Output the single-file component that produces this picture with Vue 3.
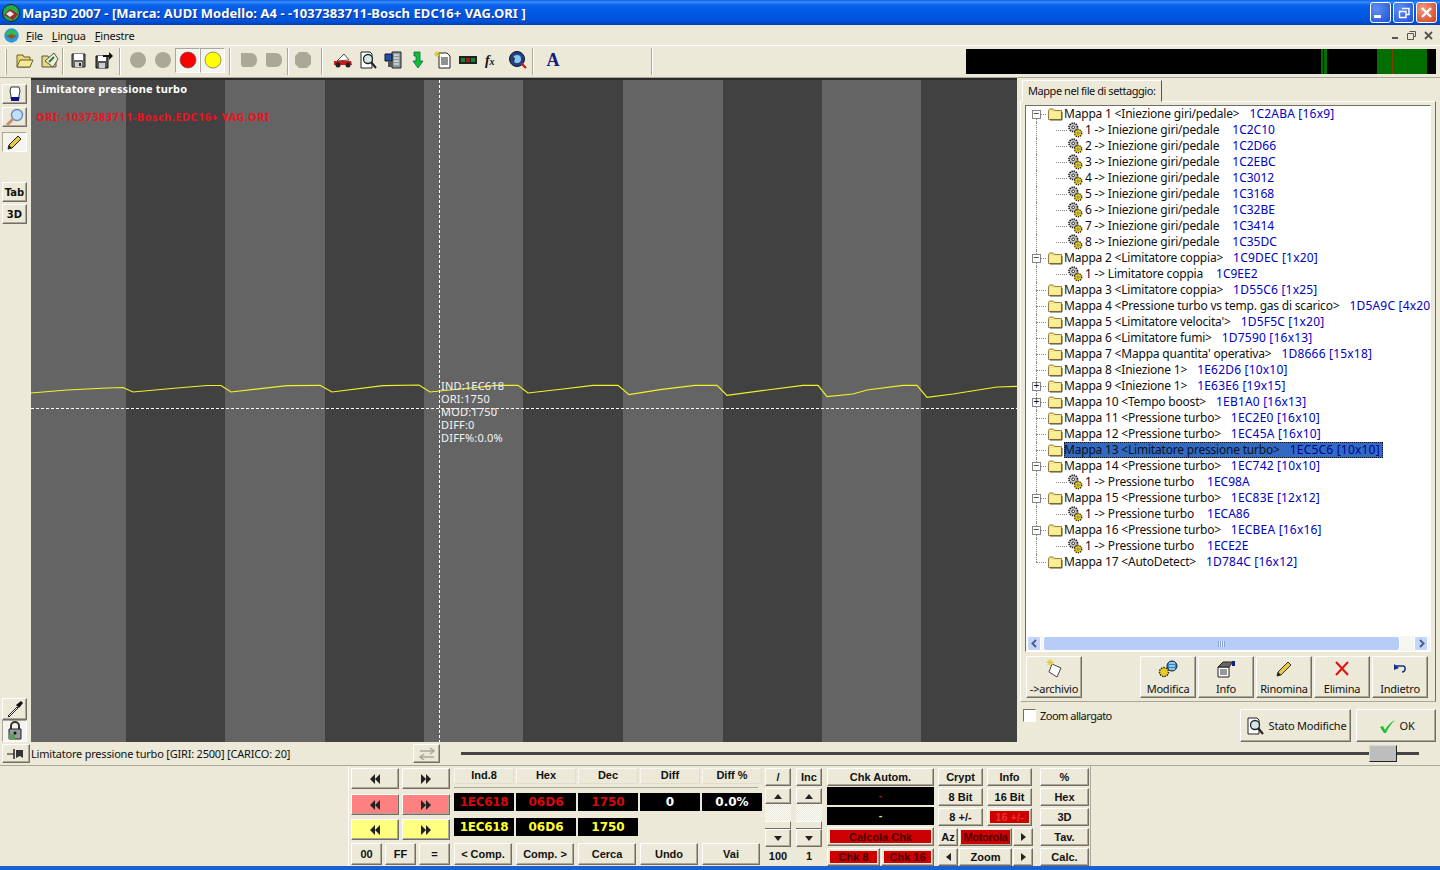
<template>
  <div class="app">
    <svg class="defs" width="0" height="0">
      <defs>
        <symbol id="folder" viewBox="0 0 16 16"><path d="M1.500 4.500l1-1.500h4l1 1.500h7v9h-13z" fill="#f8e67a" stroke="#8d8250"/><path d="M2.500 6h11v6.500h-11z" fill="#fbee98"/><path d="M15 6v8H3" fill="none" stroke="#5a5020"/></symbol>
        <symbol id="gear" viewBox="0 0 18 18">
          <circle cx="7" cy="6" r="4.800" fill="#c4c4c4" stroke="#222" stroke-width="1.800" stroke-dasharray="1.500 1"/><circle cx="7" cy="6" r="1.500" fill="#fff" stroke="#222"/>
          <circle cx="12.500" cy="12.500" r="4" fill="#f2d524" stroke="#3a3200" stroke-width="1.700" stroke-dasharray="1.500 1"/><circle cx="12.500" cy="12.500" r="1.200" fill="#fff" stroke="#3a3200" stroke-width=".7"/>
        </symbol>
        <symbol id="open" viewBox="0 0 20 20"><path d="M2 5h6l1 2h6v10H2z" fill="#e8d978" stroke="#66602a"/><path d="M2 17l3-7h13l-3 7z" fill="#f6ea9a" stroke="#66602a"/></symbol>
        <symbol id="open2" viewBox="0 0 20 20"><path d="M2 6h6l1 2h7v9H2z" fill="#e8d978" stroke="#555"/><path d="M5 11l9-8 4 6-5 8z" fill="#f3f0d8" stroke="#555"/><path d="M9 12l5-5" stroke="#2a7a3a" stroke-width="2"/></symbol>
        <symbol id="save" viewBox="0 0 20 20"><path d="M4 4h13v13H4z" fill="#6a6a6a" stroke="#222"/><path d="M6 4h9v6H6z" fill="#fff"/><path d="M7 12h7v5H7z" fill="#cfcfcf"/><path d="M11 13h2v3h-2z" fill="#222"/></symbol>
        <symbol id="saveall" viewBox="0 0 20 20"><path d="M3 6h12v12H3z" fill="#555" stroke="#111"/><path d="M5 6h8v5H5z" fill="#fff"/><path d="M6 13h6v5H6z" fill="#ccc"/><path d="M10 5h6V2l4 4-4 4V7h-6z" fill="#111"/></symbol>
        <symbol id="dot-gray" viewBox="0 0 20 20"><circle cx="10" cy="10" r="8" fill="#aca899"/></symbol>
        <symbol id="dot-red" viewBox="0 0 20 20"><circle cx="10" cy="10" r="8" fill="#f00" stroke="#555" stroke-width=".6"/></symbol>
        <symbol id="dot-yellow" viewBox="0 0 20 20"><circle cx="10" cy="10" r="8" fill="#ff0" stroke="#555" stroke-width=".6"/></symbol>
        <symbol id="shape-a" viewBox="0 0 20 20"><path d="M2 3h9c5 0 7 3 7 7s-2 7-7 7H5c-2 0-3-1-3-3z" fill="#aca899"/></symbol>
        <symbol id="shape-b" viewBox="0 0 20 20"><path d="M6 2h8l4 4v8l-4 4H6l-4-4V6z" fill="#aca899"/></symbol>
        <symbol id="car" viewBox="0 0 20 20"><path d="M4 11l7-7 5 6z" fill="#fff" stroke="#555"/><path d="M1 11h17l1 4H1z" fill="#d01818"/><circle cx="5" cy="15" r="2.500" fill="#222"/><circle cx="15" cy="15" r="2.500" fill="#222"/></symbol>
        <symbol id="docsearch" viewBox="0 0 20 20"><path d="M3 2h9l2 2v14H3z" fill="#fff" stroke="#222"/><circle cx="10" cy="9" r="4.500" fill="#cfe8e8" stroke="#222" stroke-width="1.300"/><path d="M13 12l5 6" stroke="#222" stroke-width="2"/></symbol>
        <symbol id="binder" viewBox="0 0 20 20"><path d="M9 2h9v16H9z" fill="#8a9a9a" stroke="#222"/><path d="M11 5h5M11 8h5M11 11h5M11 14h5" stroke="#fff"/><path d="M2 4h7v7H2z" fill="#1f4fa8" stroke="#112"/><path d="M5 11h4v6H5z" fill="#555"/></symbol>
        <symbol id="down" viewBox="0 0 20 20"><path d="M6 2h6v9h3l-5 7-5-7h3V6H6z" fill="#10c030" stroke="#066" stroke-width=".8"/></symbol>
        <symbol id="newdoc" viewBox="0 0 20 20"><path d="M6 3h8l3 3v12H6z" fill="#fff" stroke="#222"/><path d="M8 8h7M8 10h7M8 12h7M8 14h7" stroke="#222"/><path d="M4 1v6M1 4h6M2 2l4 4M6 2L2 6" stroke="#d8c020"/></symbol>
        <symbol id="led" viewBox="0 0 20 20"><path d="M1 6h18v8H1z" fill="#222"/><path d="M3 8h4v4H3z" fill="#0a8a2a"/><path d="M8 8h4v4H8z" fill="#a01818"/><path d="M13 8h4v4h-4z" fill="#0a8a2a"/></symbol>
        <symbol id="globe" viewBox="0 0 20 20"><circle cx="9" cy="9" r="7.500" fill="#1f3f90" stroke="#111"/><circle cx="9" cy="9" r="4" fill="#8ac8f0"/><path d="M3 6l4 2-1 5z" fill="#334"/><path d="M13 13l5 5" stroke="#c01818" stroke-width="2.200"/></symbol>
        <symbol id="fx" viewBox="0 0 20 20"><text x="2" y="15" font-family="Liberation Serif, serif" font-style="italic" font-weight="700" font-size="14" fill="#111">f<tspan font-size="10">x</tspan></text></symbol>
        <symbol id="letter" viewBox="0 0 20 20"><text x="10" y="16" text-anchor="middle" font-family="Liberation Serif, serif" font-weight="700" font-size="18" fill="#10207a">A</text></symbol>
        <symbol id="rew" viewBox="0 0 12 10"><path d="M6 0v10L1 5zM11 0v10L6 5z" fill="#222"/></symbol>
        <symbol id="fwd" viewBox="0 0 12 10"><path d="M1 0v10l5-5zM6 0v10l5-5z" fill="#222"/></symbol>
      </defs>
    </svg>

    <header class="titlebar">
      <svg class="app-icon" width="20" height="20" viewBox="0 0 20 20"><circle cx="10" cy="10" r="8.500" fill="#1fae4a" stroke="#123"/><path d="M3 12l6-6 8 5-5 6z" fill="#a02828"/><path d="M5 11l4-3 4 3-4 3z" fill="#e8e8e8"/></svg>
      <span class="title-text">Map3D 2007 - [Marca: AUDI Modello: A4  - -1037383711-Bosch EDC16+ VAG.ORI ]</span>
      <div class="win-buttons">
        <button class="win-btn"><i class="i-min"></i></button>
        <button class="win-btn"><svg width="12" height="12" viewBox="0 0 12 12"><path d="M4 1.500h7v6H8M1.500 4.500h6.500v6H1.500z" fill="none" stroke="#fff" stroke-width="1.400"/></svg></button>
        <button class="win-btn close"><svg width="13" height="13" viewBox="0 0 13 13"><path d="M2 2l9 9M11 2l-9 9" stroke="#fff" stroke-width="2.400"/></svg></button>
      </div>
    </header>

    <nav class="menubar">
      <svg class="menu-icon" width="17" height="17" viewBox="0 0 20 20"><circle cx="10" cy="10" r="8.500" fill="#2a9ae0"/><path d="M3 8c4-6 10-6 14 0l-7 3z" fill="#2cbf50"/><path d="M4 11l6-3 6 3-6 3z" fill="#8a5a20"/></svg>
      <span class="menu-item"><u>F</u>ile</span>
      <span class="menu-item"><u>L</u>ingua</span>
      <span class="menu-item"><u>F</u>inestre</span>
      <div class="mdi-buttons">
        <span class="mdi"><i class="mdi-min"></i></span>
        <span class="mdi"><svg width="11" height="11" viewBox="0 0 11 11"><path d="M3.500 1.500h6v5H7.500M1.500 3.500h6v6h-6z" fill="none" stroke="#555"/></svg></span>
        <span class="mdi"><svg width="11" height="11" viewBox="0 0 11 11"><path d="M2 2l7 7M9 2l-7 7" stroke="#555" stroke-width="1.800"/></svg></span>
      </div>
    </nav>

    <div class="toolbar">
      <span class="grip"></span>
      <template v-for="(item, i) in toolItems" :key="i">
        <span v-if="item.sep" class="tool-sep" :style="{ marginLeft: item.l + 'px', marginRight: item.r + 'px' }"></span>
        <span v-else class="tool" :class="{ latched: item.latched }">
          <svg width="20" height="20"><use :href="'#' + item.icon" /></svg>
        </span>
      </template>
      <div class="led-panel">
        <span class="led l1"></span>
        <span class="led l2"></span>
        <span class="led l3"><i></i></span>
      </div>
    </div>

    <main class="workspace">
      <aside class="sidetools">
        <span class="btn side-btn">
          <svg width="16" height="18" viewBox="0 0 16 18"><path d="M4 2h8l1 4-1 5v3H4v-3L3 6z" fill="#fff" stroke="#333"/><path d="M4 12h8v4H4z" fill="#10108a"/></svg>
        </span>
        <span class="btn side-btn mt3">
          <svg width="20" height="18" viewBox="0 0 20 18"><circle cx="12" cy="7" r="5.500" fill="#bfe0f8" stroke="#6a8ab0" stroke-width="1.400"/><path d="M8 11l-6 6" stroke="#c89070" stroke-width="3"/></svg>
        </span>
        <span class="btn side-btn pressed mt5">
          <svg width="17" height="17" viewBox="0 0 17 17"><path d="M2 15l1-4L12 2l3 3-9 9z" fill="#e8c840" stroke="#222"/><path d="M2 15l1-4 3 3z" fill="#222"/></svg>
        </span>
        <span class="btn side-btn text-btn mt30">Tab</span>
        <span class="btn side-btn text-btn mt2">3D</span>
        <span class="spacer"></span>
        <span class="btn side-btn tall">
          <svg width="20" height="20" viewBox="0 0 20 20"><path d="M3 17l9-9 1 1-9 9z" fill="#fff" stroke="#222"/><path d="M11 6l3 3 4-5-2-2z" fill="#111"/></svg>
        </span>
        <span class="btn side-btn tall pressed flat-bottom">
          <svg width="16" height="20" viewBox="0 0 16 20"><path d="M4 8V5a4 4 0 0 1 8 0v3" fill="none" stroke="#333" stroke-width="2"/><path d="M2 8h12v10H2z" fill="#9a9a9a" stroke="#222"/><path d="M2 13h6v5H2z" fill="#5aa05a"/><circle cx="8" cy="12" r="1.500" fill="#111"/></svg>
        </span>
      </aside>

      <section class="chart">
        <svg class="chart-svg" viewBox="31 80 986 662" width="986" height="662">
          <rect v-for="b in bands" :key="b.x" :x="b.x" y="80" :width="b.w" height="662" :fill="b.dark ? '#414141' : '#646464'" />
          <polyline :points="tracePoints" fill="none" stroke="#f2f228" stroke-width="1.200" />
          <line x1="439.500" y1="80" x2="439.500" y2="742" class="cross" />
          <line x1="31" y1="408.500" x2="1017" y2="408.500" class="cross" />
        </svg>
        <div class="chart-title">Limitatore pressione turbo</div>
        <div class="chart-file">ORI:-1037383711-Bosch.EDC16+ VAG.ORI</div>
        <div class="chart-tip">
          <div>IND:1EC618</div>
          <div>ORI:1750</div>
          <div>MOD:1750</div>
          <div>DIFF:0</div>
          <div>DIFF%:0.0%</div>
        </div>
      </section>

      <aside class="maps">
        <div class="tab">Mappe nel file di settaggio:</div>
        <div class="page">
          <div class="tree">
            <div class="tree-list">
              <div
                v-for="(row, i) in treeRows"
                :key="i"
                class="tree-row"
                :class="{ child: row.child, first: i === 0, last: i === treeRows.length - 1 }"
              >
                <span class="vline"></span>
                <span v-if="row.child" class="hline child-line"></span>
                <span v-else class="hline"></span>
                <span v-if="row.twist" class="twist">{{ row.twist }}</span>
                <svg class="row-icon" width="16" height="16"><use :href="row.child ? '#gear' : '#folder'" /></svg>
                <span class="row-label" :class="{ selected: row.selected }">
                  <span class="row-name">{{ row.name }}</span><span class="row-addr">{{ row.addr }}</span>
                </span>
              </div>
            </div>
            <div class="hscroll">
              <span class="sb-btn"><svg width="9" height="9" viewBox="0 0 9 9"><path d="M6 1L2.500 4.500 6 8" fill="none" stroke="#4d6185" stroke-width="2" /></svg></span>
              <span class="sb-thumb"><i></i></span>
              <span class="sb-btn"><svg width="9" height="9" viewBox="0 0 9 9"><path d="M3 1l3.500 3.500L3 8" fill="none" stroke="#4d6185" stroke-width="2" /></svg></span>
            </div>
          </div>
          <div class="actions">
            <button class="btn action archive">
              <svg width="22" height="20" viewBox="0 0 22 20"><path d="M9 5l9 4-4 9-8-5z" fill="#fff" stroke="#444"/><path d="M7 0v7M3.500 3.500h7M4.500 1l5 5M9.500 1l-5 5" stroke="#e0c820"/></svg>
              <span>-&gt;archivio</span>
            </button>
            <button class="btn action">
              <svg width="22" height="20" viewBox="0 0 22 20"><circle cx="15" cy="7" r="5" fill="#2a8ac0" stroke="#124"/><path d="M12 4h6M12 7h6M12 10h6" stroke="#fff"/><circle cx="7" cy="13" r="4.500" fill="#e8cc20" stroke="#222" stroke-dasharray="1.500 1" stroke-width="1.400"/></svg>
              <span>Modifica</span>
            </button>
            <button class="btn action">
              <svg width="22" height="20" viewBox="0 0 22 20"><path d="M3 8h11v10H3z" fill="#fff" stroke="#222"/><path d="M3 8l5-5h10l-4 5z" fill="#666" stroke="#222"/><path d="M5 11h7M5 13h7M5 15h7" stroke="#333"/><path d="M17 2h3v5h-3z" fill="#10207a"/></svg>
              <span>Info</span>
            </button>
            <button class="btn action">
              <svg width="22" height="20" viewBox="0 0 22 20"><path d="M4 17l1-4L15 3l3 3L8 16z" fill="#e8c840" stroke="#333"/><path d="M4 17l1-4 3 3z" fill="#222"/></svg>
              <span>Rinomina</span>
            </button>
            <button class="btn action">
              <svg width="22" height="20" viewBox="0 0 22 20"><path d="M5 3l12 13M17 3L5 16" stroke="#e01010" stroke-width="2" /></svg>
              <span>Elimina</span>
            </button>
            <button class="btn action">
              <svg width="22" height="20" viewBox="0 0 22 20"><path d="M6 7h8c3 0 3 6-1 6" fill="none" stroke="#10308a" stroke-width="1.500"/><path d="M5 11V5l5 4z" fill="#10308a"/></svg>
              <span>Indietro</span>
            </button>
          </div>
        </div>
        <div class="options">
          <label class="zoom-check"><span class="checkbox"></span>Zoom allargato</label>
          <button class="btn wide state">
            <svg width="20" height="20"><use href="#docsearch" /></svg>
            Stato Modifiche
          </button>
          <button class="btn wide ok">
            <svg width="18" height="16" viewBox="0 0 18 16"><path d="M2 9l3-1 2 4c3-5 6-8 10-10-4 4-7 8-9 13H6z" fill="#1cc030"/></svg>
            OK
          </button>
        </div>
      </aside>
    </main>

    <div class="statusbar">
      <span class="btn pin">
        <svg width="20" height="12" viewBox="0 0 20 12"><path d="M1 6h7" stroke="#222"/><path d="M8 1v10" stroke="#222" stroke-width="1.500"/><path d="M10 2h7v8l-3-2-4 2z" fill="#333"/></svg>
      </span>
      <span class="status-text">Limitatore pressione turbo [GIRI: 2500] [CARICO: 20]</span>
      <span class="btn swap">
        <svg width="16" height="12" viewBox="0 0 16 12"><path d="M1 3h14M1 9h14M11 0l4 3-4 3M5 6L1 9l4 3" fill="none" stroke="#aca899" stroke-width="1.500"/></svg>
      </span>
      <div class="slider"><span class="slider-thumb"></span></div>
    </div>

    <section class="keys">
      <div class="col-a">
        <div class="ka-row r1"><span class="btn ka"><svg width="12" height="10"><use href="#rew" /></svg></span><span class="btn ka"><svg width="12" height="10"><use href="#fwd" /></svg></span></div>
        <div class="ka-row r2"><span class="btn ka pink"><svg width="12" height="10"><use href="#rew" /></svg></span><span class="btn ka pink"><svg width="12" height="10"><use href="#fwd" /></svg></span></div>
        <div class="ka-row r3"><span class="btn ka yellow"><svg width="12" height="10"><use href="#rew" /></svg></span><span class="btn ka yellow"><svg width="12" height="10"><use href="#fwd" /></svg></span></div>
        <div class="ka-row r4"><span class="btn kb">00</span><span class="btn kb">FF</span><span class="btn kb">=</span></div>
      </div>

      <div class="col-b">
        <div class="five heads"><span v-for="h in heads" :key="h" class="head">{{ h }}</span></div>
        <div class="rule"></div>
        <div class="five readout r-red">
          <span class="lcd small">1EC618</span><span class="lcd">06D6</span><span class="lcd">1750</span>
          <span class="lcd white">0</span><span class="lcd white">0.0%</span>
        </div>
        <div class="five readout r-yellow">
          <span class="lcd small">1EC618</span><span class="lcd">06D6</span><span class="lcd">1750</span>
        </div>
        <div class="five cmds"><span v-for="c in cmds" :key="c" class="btn cmd">{{ c }}</span></div>
      </div>

      <div class="col-c">
        <div v-for="s in spins" :key="s.head" class="spin">
          <span class="btn s-head">{{ s.head }}</span>
          <span class="btn s-arrow"><i class="tri-up"></i></span>
          <span class="s-track"><i></i></span>
          <span class="btn s-arrow tall-arrow"><i class="tri-down"></i></span>
          <span class="s-val">{{ s.value }}</span>
        </div>
      </div>

      <div class="col-d">
        <span class="btn d-row">Chk Autom.</span>
        <span class="lcd-wide red-dash">-</span>
        <span class="lcd-wide green-dash">-</span>
        <span class="btn d-row calc"><b>Calcola Chk</b></span>
        <div class="chk-row">
          <span class="btn chk"><b>Chk 8</b></span>
          <span class="btn chk"><b>Chk 16</b></span>
        </div>
      </div>

      <div class="col-e">
        <div class="e-row"><span class="btn e2">Crypt</span><span class="btn e2">Info</span></div>
        <div class="e-row"><span class="btn e2">8 Bit</span><span class="btn e2">16 Bit</span></div>
        <div class="e-row"><span class="btn e2">8 +/-</span><span class="btn e2 lit"><b>16 +/-</b></span></div>
        <div class="e-row tri">
          <span class="btn e-small">Az</span>
          <span class="btn e-mid lit-dark"><b>Motorola</b></span>
          <span class="btn e-small"><i class="tri-right"></i></span>
        </div>
        <div class="e-row tri">
          <span class="btn e-small"><i class="tri-left"></i></span>
          <span class="btn e-mid">Zoom</span>
          <span class="btn e-small"><i class="tri-right"></i></span>
        </div>
      </div>

      <div class="col-f">
        <span v-for="f in sideKeys" :key="f" class="btn f-key">{{ f }}</span>
      </div>
    </section>

    <div class="bottom-edge"></div>
  </div>
</template>

<script setup>
const sep = (l, r) => ({ sep: true, l, r })
const toolItems = [
  { icon: 'open' }, { icon: 'open2' }, sep(0, 1),
  { icon: 'save' }, { icon: 'saveall' }, sep(4, 4),
  { icon: 'dot-gray' }, { icon: 'dot-gray' },
  { icon: 'dot-red', latched: true }, { icon: 'dot-yellow', latched: true }, sep(4, 5),
  { icon: 'shape-a' }, { icon: 'shape-a' }, sep(1, 1), { icon: 'shape-b' }, sep(6, 7),
  { icon: 'car' }, { icon: 'docsearch' }, { icon: 'binder' }, { icon: 'down' },
  { icon: 'newdoc' }, { icon: 'led' }, { icon: 'fx' }, { icon: 'globe' }, sep(2, 6),
  { icon: 'letter' }, sep(86, 0)
]

const edges = [31, 126, 225, 325, 424, 523, 623, 723, 822, 921, 1017]
const bands = edges.slice(0, -1).map((x, i) => ({ x, w: edges[i + 1] - x, dark: i % 2 === 1 }))

const tracePoints = [
  [31, 393], [67, 390], [107, 388], [123, 387.5], [133, 392], [177, 388], [207, 385.5], [221, 385.5],
  [231, 392], [287, 385.7], [320, 385.3], [332, 392], [383, 385.7], [419, 385], [430, 392], [460, 389],
  [497, 385.3], [518, 385.3], [528, 393], [563, 389], [593, 385.3], [618, 385.3], [629, 394.7], [660, 389.7],
  [695, 385.3], [717, 385.3], [727, 395.3], [767, 390], [803, 385.3], [818, 385.3], [827, 396.7], [853, 394],
  [867, 390], [903, 385.3], [917, 385.3], [927, 397.3], [953, 394], [997, 387], [1017, 386.3]
].map((p) => p.join(',')).join(' ')

const inj = (n, addr) => ({ child: true, name: `${n} -> Iniezione giri/pedale`, addr })
const treeRows = [
  { twist: '−', name: 'Mappa 1 <Iniezione giri/pedale>', addr: '1C2ABA [16x9]' },
  inj(1, '1C2C10'), inj(2, '1C2D66'), inj(3, '1C2EBC'), inj(4, '1C3012'),
  inj(5, '1C3168'), inj(6, '1C32BE'), inj(7, '1C3414'), inj(8, '1C35DC'),
  { twist: '−', name: 'Mappa 2 <Limitatore coppia>', addr: '1C9DEC [1x20]' },
  { child: true, name: '1 -> Limitatore coppia', addr: '1C9EE2' },
  { name: 'Mappa 3 <Limitatore coppia>', addr: '1D55C6 [1x25]' },
  { name: 'Mappa 4 <Pressione turbo vs temp. gas di scarico>', addr: '1D5A9C [4x20]' },
  { name: "Mappa 5 <Limitatore velocita'>", addr: '1D5F5C [1x20]' },
  { name: 'Mappa 6 <Limitatore fumi>', addr: '1D7590 [16x13]' },
  { name: "Mappa 7 <Mappa quantita' operativa>", addr: '1D8666 [15x18]' },
  { name: 'Mappa 8 <Iniezione 1>', addr: '1E62D6 [10x10]' },
  { twist: '+', name: 'Mappa 9 <Iniezione 1>', addr: '1E63E6 [19x15]' },
  { twist: '+', name: 'Mappa 10 <Tempo boost>', addr: '1EB1A0 [16x13]' },
  { name: 'Mappa 11 <Pressione turbo>', addr: '1EC2E0 [16x10]' },
  { name: 'Mappa 12 <Pressione turbo>', addr: '1EC45A [16x10]' },
  { name: 'Mappa 13 <Limitatore pressione turbo>', addr: '1EC5C6 [10x10]', selected: true },
  { twist: '−', name: 'Mappa 14 <Pressione turbo>', addr: '1EC742 [10x10]' },
  { child: true, name: '1 -> Pressione turbo', addr: '1EC98A' },
  { twist: '−', name: 'Mappa 15 <Pressione turbo>', addr: '1EC83E [12x12]' },
  { child: true, name: '1 -> Pressione turbo', addr: '1ECA86' },
  { twist: '−', name: 'Mappa 16 <Pressione turbo>', addr: '1ECBEA [16x16]' },
  { child: true, name: '1 -> Pressione turbo', addr: '1ECE2E' },
  { name: 'Mappa 17 <AutoDetect>', addr: '1D784C [16x12]' }
]

const heads = ['Ind.8', 'Hex', 'Dec', 'Diff', 'Diff %']
const cmds = ['< Comp.', 'Comp. >', 'Cerca', 'Undo', 'Vai']
const spins = [
  { head: '/', value: '100' },
  { head: 'Inc', value: '1' }
]
const sideKeys = ['%', 'Hex', '3D', 'Tav.', 'Calc.']
</script>

<style>
html, body {
  margin: 0;
  background: #ece9d8;
}
</style>

<style scoped>
.app {
  width: 1440px;
  height: 870px;
  overflow: hidden;
  display: flex;
  flex-direction: column;
  background: #ece9d8;
  color: #111;
  font-family: "Noto Sans", "Liberation Sans", sans-serif;
  font-size: 11px;
  letter-spacing: -0.2px;
}
.defs {
  position: absolute;
}
button {
  font-family: inherit;
  font-size: inherit;
  letter-spacing: inherit;
  color: inherit;
  padding: 0;
}
.btn {
  box-sizing: border-box;
  display: flex;
  align-items: center;
  justify-content: center;
  background: #ece9d8;
  border: 1px solid;
  border-color: #fff #716f64 #716f64 #fff;
  box-shadow: inset -1px -1px 0 #aca899;
}

/* title bar */
.titlebar {
  height: 25px;
  flex: none;
  display: flex;
  align-items: center;
  background: linear-gradient(#0a5fe8 0, #3a8cf8 2px, #0a62ea 5px, #0058e2 14px, #0052d8 21px, #0040b8 25px);
  color: #fff;
}
.app-icon {
  margin-left: 1px;
  flex: none;
}
.title-text {
  margin-left: 1px;
  white-space: pre;
  font-size: 13px;
  font-weight: 700;
  letter-spacing: 0.05px;
  text-shadow: 1px 1px 0 #0f2f90;
}
.win-buttons {
  margin-left: auto;
  margin-right: 3px;
  display: flex;
  gap: 2px;
}
.win-btn {
  box-sizing: border-box;
  width: 21px;
  height: 21px;
  display: flex;
  align-items: center;
  justify-content: center;
  border: 1px solid #fff;
  border-radius: 3px;
  background: radial-gradient(circle at 30% 30%, #5f8ff0, #1f50d8);
}
.win-btn.close {
  background: radial-gradient(circle at 30% 30%, #f09a80, #d0401c);
}
.i-min {
  display: block;
  width: 7px;
  height: 3px;
  background: #fff;
  margin: 8px 6px 0 0;
}

/* menu */
.menubar {
  height: 20px;
  flex: none;
  display: flex;
  align-items: center;
}
.menu-icon {
  margin-left: 3px;
  margin-right: 6px;
}
.menu-item {
  margin-right: 9px;
}
.mdi-buttons {
  margin-left: auto;
  margin-right: 4px;
  display: flex;
  gap: 2px;
}
.mdi {
  width: 15px;
  height: 16px;
  display: flex;
  align-items: center;
  justify-content: center;
}
.mdi-min {
  width: 6px;
  height: 2px;
  background: #555;
  margin-top: 6px;
}

/* toolbar */
.toolbar {
  height: 33px;
  flex: none;
  box-sizing: border-box;
  display: flex;
  align-items: center;
  border-top: 1px solid #fff;
  border-bottom: 1px solid #aca899;
}
.grip {
  width: 2px;
  height: 26px;
  margin-left: 5px;
  margin-right: 5px;
  border-left: 1px solid #fff;
  border-right: 1px solid #aca899;
  box-sizing: border-box;
}
.tool {
  box-sizing: border-box;
  width: 25px;
  height: 25px;
  flex: none;
  margin-bottom: 3px;
  display: flex;
  align-items: center;
  justify-content: center;
}
.tool.latched {
  background: #f5f4ee;
  border: 1px solid;
  border-color: #aca899 #fff #fff #aca899;
}
.tool-sep {
  width: 2px;
  height: 27px;
  flex: none;
  box-sizing: border-box;
  border-left: 1px solid #aca899;
  border-right: 1px solid #fff;
}
.led-panel {
  position: relative;
  width: 470px;
  height: 25px;
  margin-left: auto;
  margin-right: 4px;
  background: #000;
}
.led {
  position: absolute;
  top: 0;
  bottom: 0;
  background: #006f00;
}
.l1 { left: 355px; width: 2px; }
.l2 { left: 358px; width: 3px; }
.l3 { left: 411px; width: 50px; }
.l3 i {
  position: absolute;
  left: 15px;
  top: 0;
  bottom: 0;
  width: 1px;
  background: #8a3a00;
}

/* main area */
.workspace {
  height: 664px;
  flex: none;
  display: flex;
}
.sidetools {
  width: 31px;
  flex: none;
  box-sizing: border-box;
  padding: 6px 0 0 2px;
  display: flex;
  flex-direction: column;
  align-items: flex-start;
}
.side-btn {
  width: 25px;
  height: 20px;
}
.side-btn.tall {
  height: 22px;
  flex: none;
}
.side-btn.pressed {
  background: #f5f4ee;
  border-color: #aca899 #fff #fff #aca899;
  box-shadow: none;
}
.text-btn {
  font-family: "DejaVu Sans", sans-serif;
  font-size: 10px;
  font-weight: 700;
  letter-spacing: 0;
}
.mt2 { margin-top: 2px; }
.mt3 { margin-top: 3px; }
.mt5 { margin-top: 5px; }
.mt30 { margin-top: 30px; }
.spacer {
  flex: 1;
}
.flat-bottom {
  background: #ece9d8;
}

/* chart */
.chart {
  position: relative;
  width: 986px;
  height: 664px;
  flex: none;
  box-sizing: border-box;
  border-top: 2px solid #2a2a2a;
  overflow: hidden;
  background: #414141;
}
.chart-svg {
  display: block;
}
.cross {
  stroke: #fff;
  stroke-width: 1;
  stroke-dasharray: 3 2;
}
.chart-title {
  position: absolute;
  left: 5px;
  top: 1px;
  color: #fff;
  font-weight: 700;
  font-size: 11px;
  letter-spacing: 0.15px;
}
.chart-file {
  position: absolute;
  left: 5px;
  top: 29px;
  color: #ee1020;
  font-weight: 700;
  font-size: 11px;
  letter-spacing: 0.47px;
}
.chart-tip {
  position: absolute;
  left: 410px;
  top: 299px;
  color: #f4f4f4;
  font-size: 11px;
  line-height: 13px;
  letter-spacing: 0.2px;
}

/* right panel */
.maps {
  width: 423px;
  flex: none;
  box-sizing: border-box;
  padding-left: 3px;
}
.tab {
  box-sizing: border-box;
  width: 140px;
  height: 22px;
  margin: 2px 0 -1px 2px;
  padding: 2px 0 0 5px;
  white-space: nowrap;
  letter-spacing: -0.45px;
  border: 1px solid;
  border-color: #fff #555 #ece9d8 #fff;
  position: relative;
  z-index: 1;
  background: #ece9d8;
}
.page {
  box-sizing: border-box;
  width: 416px;
  height: 601px;
  border: 1px solid;
  border-color: #fff #716f64 #aca899 #fff;
  padding: 3px 0 0 4px;
}
.tree {
  box-sizing: border-box;
  width: 406px;
  height: 547px;
  background: #fff;
  border: 1px solid #716f64;
  border-color: #716f64 #fff #fff #716f64;
  display: flex;
  flex-direction: column;
}
.tree-list {
  flex: 1;
  overflow: hidden;
}
.tree-row {
  position: relative;
  height: 16px;
  display: flex;
  align-items: center;
  white-space: nowrap;
  font-size: 12px;
  padding-left: 38px;
  line-height: 16px;
}
.tree-row.child {
  padding-left: 41px;
}
.vline {
  position: absolute;
  left: 10px;
  top: 0;
  bottom: 0;
  border-left: 1px dotted #888;
}
.tree-row.first .vline { top: 8px; }
.tree-row.last .vline { bottom: 8px; }
.hline {
  position: absolute;
  left: 10px;
  width: 10px;
  top: 8px;
  border-top: 1px dotted #888;
}
.child-line {
  left: 30px;
  width: 11px;
}
.twist {
  position: absolute;
  left: 6px;
  top: 4px;
  width: 9px;
  height: 9px;
  box-sizing: border-box;
  border: 1px solid #848484;
  background: #fff;
  font-size: 10px;
  line-height: 6px;
  letter-spacing: 0;
  text-align: center;
  font-family: "Liberation Sans", sans-serif;
  z-index: 1;
}
.row-icon {
  position: absolute;
  left: 21px;
  top: 0;
}
.tree-row.child .row-icon {
  left: 41px;
}
.row-label {
  margin-left: 0;
  padding-right: 3px;
}
.tree-row.child .row-label {
  margin-left: 18px;
}
.row-addr {
  margin-left: 10px;
  color: #0000c0;
  letter-spacing: 0.2px;
}
.tree-row.child .row-addr {
  margin-left: 13px;
  letter-spacing: 0;
}
.row-label.selected {
  background: #316ac5;
  outline: 1px dotted #111;
  outline-offset: -1px;
}
.row-label.selected .row-addr {
  color: #000090;
}
.hscroll {
  height: 15px;
  flex: none;
  display: flex;
  align-items: center;
  padding: 0 1px;
  background: #f6f6f0;
}
.sb-btn {
  box-sizing: border-box;
  width: 14px;
  height: 15px;
  display: flex;
  align-items: center;
  justify-content: center;
  background: #c3d5fb;
  border: 1px solid #fff;
  border-radius: 2px;
}
.sb-thumb {
  width: 357px;
  height: 15px;
  margin: 0 14px 0 2px;
  box-sizing: border-box;
  background: #b8ccf8;
  border: 1px solid #fff;
  border-radius: 3px;
  display: flex;
  align-items: center;
  justify-content: center;
}
.sb-thumb i {
  width: 7px;
  height: 6px;
  background: repeating-linear-gradient(90deg, #8aa4d8 0 1px, #e4ecfc 1px 2px);
}
.actions {
  display: flex;
  gap: 2px;
  padding: 4px 0 0 1px;
}
.action {
  width: 56px;
  height: 42px;
  flex-direction: column;
  gap: 2px;
  font-size: 11px;
}
.action.archive {
  margin-right: 56px;
}
.options {
  display: flex;
  align-items: flex-start;
  padding: 7px 0 0 3px;
}
.zoom-check {
  display: flex;
  align-items: center;
  gap: 4px;
  width: 217px;
  line-height: 13px;
  letter-spacing: -0.5px;
}
.checkbox {
  width: 11px;
  height: 11px;
  background: #fff;
  border: 1px solid;
  border-color: #716f64 #fff #fff #716f64;
}
.wide {
  height: 33px;
  gap: 4px;
}
.state {
  width: 111px;
}
.ok {
  width: 80px;
  margin-left: 5px;
}

/* status line */
.statusbar {
  height: 24px;
  flex: none;
  box-sizing: border-box;
  display: flex;
  align-items: center;
  border-bottom: 1px solid #aca899;
}
.pin {
  width: 28px;
  height: 19px;
  margin-left: 2px;
}
.status-text {
  width: 382px;
  margin-left: 1px;
  white-space: nowrap;
}
.swap {
  width: 27px;
  height: 19px;
}
.slider {
  position: relative;
  width: 958px;
  height: 3px;
  margin-left: 21px;
  background: #444;
}
.slider-thumb {
  position: absolute;
  left: 908px;
  top: -7px;
  width: 28px;
  height: 17px;
  box-sizing: border-box;
  background: #bdbdbd;
  border: 1px solid;
  border-color: #d8d8d8 #222 #222 #d8d8d8;
}

/* keypad */
.keys {
  height: 100px;
  flex: none;
  box-sizing: border-box;
  width: 743px;
  margin-left: 348px;
  padding: 2px 0 0 2px;
  display: flex;
  border-left: 1px solid #fff;
  border-right: 1px solid #aca899;
  font-family: "Liberation Sans", sans-serif;
  font-size: 11px;
  font-weight: 700;
  letter-spacing: 0;
}
.bottom-edge {
  flex: 1;
  background: #1f5fd0;
}
.col-a {
  width: 99px;
  flex: none;
}
.ka-row {
  display: flex;
  gap: 3px;
}
.ka {
  width: 48px;
  height: 21px;
}
.r2 { margin-top: 5px; }
.r3 { margin-top: 4px; }
.r4 { margin-top: 3px; }
.pink { background: #ff8080; }
.yellow { background: #ffff80; }
.kb {
  width: 31px;
  height: 22px;
}
.col-b {
  width: 308px;
  margin-left: 4px;
  flex: none;
}
.five {
  display: grid;
  grid-template-columns: repeat(5, 60px);
  column-gap: 2px;
}
.head {
  height: 16px;
  text-align: center;
  line-height: 13px;
  border: 1px solid;
  border-color: #f6f5ee #e0ddcc #e0ddcc #f6f5ee;
  box-sizing: border-box;
}
.rule {
  height: 1px;
  margin: 3px 0 5px;
  background: #aca899;
  width: 304px;
}
.readout {
  height: 18px;
}
.r-yellow {
  margin-top: 7px;
}
.lcd {
  background: #000;
  text-align: center;
  font-family: "DejaVu Sans", sans-serif;
  font-size: 12px;
  line-height: 18px;
  height: 18px;
}
.lcd.small {
  letter-spacing: -0.3px;
}
.r-red .lcd { color: #d80808; }
.r-yellow .lcd { color: #ffff30; }
.r-red .lcd.white { color: #fff; }
.cmds {
  margin-top: 7px;
}
.cmd {
  width: 58px;
  height: 22px;
}
.col-c {
  margin-left: 3px;
  display: flex;
  gap: 5px;
  flex: none;
}
.spin {
  width: 26px;
  display: flex;
  flex-direction: column;
}
.s-head {
  height: 18px;
  margin-bottom: 2px;
}
.s-arrow {
  height: 16px;
}
.tall-arrow {
  height: 18px;
}
.s-track {
  position: relative;
  height: 25px;
  background: repeating-conic-gradient(#ece9d8 0 25%, #fbfbf8 0 50%) 0 0 / 2px 2px;
}
.s-track i {
  position: absolute;
  left: 0;
  right: 0;
  bottom: 0;
  height: 6px;
  background: #ece9d8;
  border-top: 1px solid #fff;
  border-bottom: 1px solid #716f64;
  border-right: 1px solid #716f64;
}
.s-val {
  height: 18px;
  margin-top: 1px;
  line-height: 16px;
  text-align: center;
  font-size: 11px;
}
.tri-up, .tri-down, .tri-left, .tri-right {
  display: block;
  width: 0;
  height: 0;
  border: 4px solid transparent;
}
.tri-up { border-bottom: 5px solid #222; border-top: 0; }
.tri-down { border-top: 5px solid #222; border-bottom: 0; }
.tri-left { border-right: 5px solid #222; border-left: 0; }
.tri-right { border-left: 5px solid #222; border-right: 0; }
.col-d {
  width: 107px;
  margin-left: 5px;
  flex: none;
  display: flex;
  flex-direction: column;
}
.d-row {
  height: 18px;
  flex: none;
}
.lcd-wide {
  height: 18px;
  margin-top: 1px;
  background: #000;
  text-align: center;
  line-height: 16px;
  flex: none;
}
.red-dash { color: #a02010; }
.green-dash {
  color: #c8e8a0;
  margin-top: 2px;
}
.calc {
  height: 19px;
  margin-top: 2px;
  padding: 2px;
}
.calc b, .chk b, .lit b, .lit-dark b {
  width: 100%;
  height: 100%;
  display: flex;
  align-items: center;
  justify-content: center;
  background: #cc0000;
  color: #4a0000;
}
.chk-row {
  display: flex;
  gap: 1px;
  margin-top: 2px;
}
.chk {
  width: 53px;
  height: 18px;
  padding: 2px;
}
.col-e {
  width: 94px;
  margin-left: 4px;
  flex: none;
  display: flex;
  flex-direction: column;
  gap: 2px;
}
.e-row {
  display: flex;
  gap: 4px;
}
.e-row.tri {
  gap: 1px;
}
.e-row .e2, .e-small, .e-mid {
  height: 18px;
}
.e2 {
  width: 45px;
}
.lit {
  padding: 2px;
}
.lit b {
  color: #ee3030;
}
.e-small {
  width: 20px;
  flex: none;
}
.e-mid {
  width: 53px;
  flex: none;
}
.lit-dark {
  padding: 1px;
  letter-spacing: -0.3px;
}
.col-f {
  width: 49px;
  margin-left: 8px;
  flex: none;
  display: flex;
  flex-direction: column;
  gap: 2px;
}
.f-key {
  height: 18px;
}
</style>
